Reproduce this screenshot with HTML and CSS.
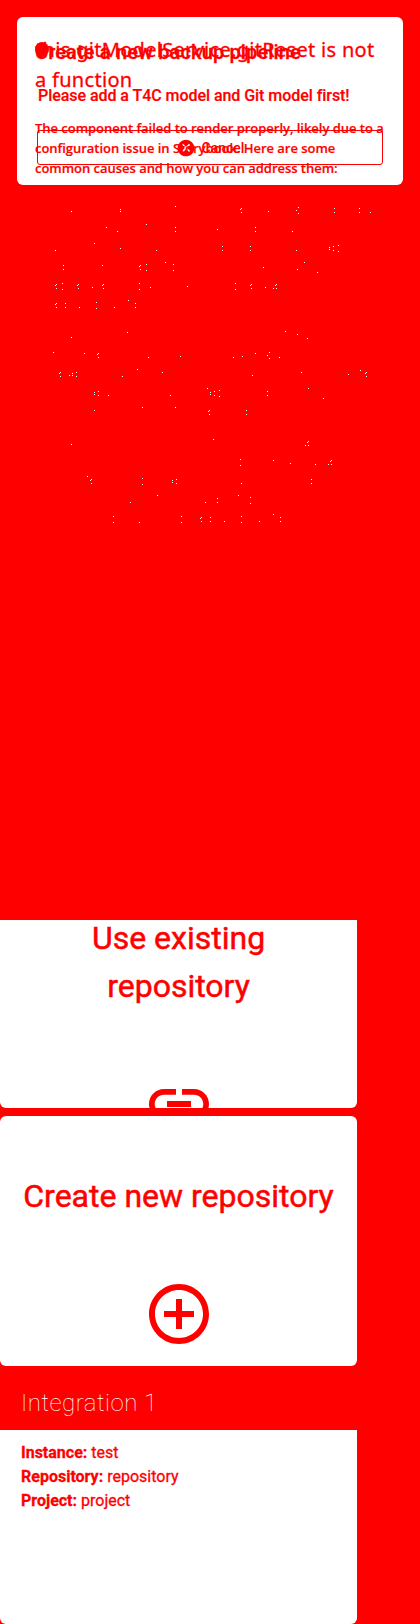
FILE: index.html
```html
<!DOCTYPE html>
<html lang="en">
<head>
  <meta charset="UTF-8">
  <meta name="viewport" content="width=device-width, initial-scale=1.0">
  <title>Create a new backup pipeline</title>
  <link rel="stylesheet" href="styles.css">
</head>
<body>
  <!-- error panel with the dialog drawn on top of it -->
  <div class="error-card">
    <h2 class="error-title">this.gitModelService.gitReset is not a function</h2>
    <p class="error-text">The component failed to render properly, likely due to a configuration issue in Storybook. Here are some common causes and how you can address them:</p>

    <div class="dialog">
      <span class="dialog-dot"></span>
      <h2 class="dialog-title">Create a new backup pipeline</h2>
      <p class="dialog-msg">Please add a T4C model and Git model first!</p>
      <button class="cancel-btn">
        <svg class="cancel-icon" viewBox="0 0 24 24"><path d="M12 2C6.47 2 2 6.47 2 12s4.47 10 10 10 10-4.47 10-10S17.53 2 12 2zm5 13.59L15.59 17 12 13.41 8.41 17 7 15.59 10.59 12 7 8.41 8.41 7 12 10.59 15.59 7 17 8.41 13.41 12 17 15.59z"/></svg>
        Cancel
      </button>
    </div>
  </div>

  <!-- leftovers of the stack trace -->
  <svg class="trace" viewBox="0 185 420 735">
    <path transform="translate(0 .5)" d="M71 211h1M120 209h1M120 211h1M175 206h1M241 208h1M240 209h1M241 212h1M268 211h1M298 207h1M296 210h1M298 213h1M334 208h1M334 212h1M359 208h1M359 212h1M370 212h1M106 227h1M117 231h1M146 224h1M175 227h1M175 231h1M217 229h1M255 227h1M255 231h1M292 231h1M94 243h1M55 250h1M120 248h1M156 250h1M222 246h1M222 250h1M250 246h1M250 250h1M296 250h1M329 247h1M329 249h1M333 246h1M333 250h1M338 245h1M338 251h1M63 265h1M63 269h1M102 265h1M140 265h1M139 266h1M140 269h1M146 264h1M146 270h1M165 262h1M173 264h1M173 270h1M263 267h1M297 269h1M304 262h1M317 272h1M56 284h1M55 285h1M56 288h1M62 283h1M62 289h1M78 284h1M77 285h1M78 288h1M92 287h1M103 284h1M102 285h1M103 288h1M139 283h1M139 289h1M150 287h1M187 286h1M235 283h1M235 289h1M251 284h1M250 285h1M251 288h1M265 287h1M273 288h1M276 284h1M275 285h1M276 288h1M56 303h1M55 304h1M56 307h1M65 303h1M65 307h1M79 307h1M96 302h1M96 308h1M114 307h1M128 300h1M135 303h1M135 307h1M71 337h1M127 332h1M285 331h1M297 334h1M307 338h1M53 352h1M84 353h1M98 353h1M97 354h1M98 357h1M148 357h1M180 356h1M233 357h1M242 356h1M255 353h1M269 352h1M267 355h1M269 358h1M279 357h1M60 372h1M59 373h1M60 376h1M69 375h1M72 373h1M72 375h1M76 372h1M76 376h1M122 376h1M137 369h1M162 372h1M252 375h1M301 372h1M348 374h1M360 370h1M366 372h1M365 373h1M366 376h1M94 392h1M94 394h1M98 391h1M98 395h1M108 395h1M170 395h1M207 388h1M210 392h1M210 394h1M214 391h1M214 395h1M219 390h1M219 396h1M267 391h1M267 395h1M308 388h1M323 398h1M94 410h1M142 407h1M175 407h1M209 410h1M208 411h1M209 414h1M246 410h1M246 414h1M213 439h1M71 444h1M308 441h1M307 442h1M305 445h1M308 445h1M240 459h1M240 465h1M273 460h1M290 463h1M315 464h1M328 464h1M331 460h1M330 461h1M331 464h1M87 476h1M91 479h1M90 480h1M91 483h1M142 478h1M142 484h1M172 480h1M172 482h1M176 479h1M176 483h1M241 483h1M311 479h1M311 483h1M157 495h1M130 502h1M205 502h1M217 498h1M217 502h1M238 495h1M250 497h1M250 503h1M113 516h1M113 522h1M139 522h1M181 516h1M181 522h1M201 517h1M200 518h1M201 521h1M210 517h1M210 521h1M224 521h1M241 516h1M241 522h1M259 521h1M273 514h1M280 517h1M280 521h1"/>
  </svg>

  <div class="cards">
    <div class="repo-card repo-card-cut">
      <div class="repo-title">Use existing repository</div>
      <svg class="repo-icon" viewBox="0 0 24 24"><path d="M3.9 12c0-1.71 1.39-3.1 3.1-3.1h4V7H7c-2.76 0-5 2.24-5 5s2.24 5 5 5h4v-1.9H7c-1.71 0-3.1-1.39-3.1-3.1zM8 13h8v-2H8v2zm9-6h-4v1.9h4c1.71 0 3.1 1.39 3.1 3.1s-1.39 3.1-3.1 3.1h-4V17h4c2.76 0 5-2.24 5-5s-2.24-5-5-5z"/></svg>
    </div>
    <div class="repo-card">
      <div class="repo-title">Create new repository</div>
      <svg class="repo-icon" viewBox="0 0 24 24"><path d="M13 7h-2v4H7v2h4v4h2v-4h4v-2h-4V7zm-1-5C6.48 2 2 6.48 2 12s4.48 10 10 10 10-4.48 10-10S17.52 2 12 2zm0 18c-4.41 0-8-3.59-8-8s3.59-8 8-8 8 3.59 8 8-3.59 8-8 8z"/></svg>
    </div>
  </div>

  <h3 class="integration-head">Integration 1</h3>
  <div class="integration-card">
    <div><b>Instance:</b> test</div>
    <div><b>Repository:</b> repository</div>
    <div><b>Project:</b> project</div>
  </div>
</body>
</html>
```

FILE: styles.css
```css
body {
  margin: 0;
  background-color: #ff0000;
  color: #ff0000;
  font-family: Roboto, sans-serif;
}

/* error panel */
.error-card {
  position: relative;
  margin: 17px 17px 0;
  height: 168px;
  padding: 18px 18px 0;
  box-sizing: border-box;
  background-color: #ffffff;
  border-radius: 6px;
  font-family: "Noto Sans", sans-serif;
}
.error-title {
  margin: 0;
  max-width: 345px;
  font-size: 20px;
  font-weight: 400;
  line-height: 30px;
  letter-spacing: 0.3px;
  -webkit-text-stroke: 0.3px #ff0000;
}
.error-text {
  margin: 23px -2px 0 0;
  font-family: "Open Sans", sans-serif;
  font-size: 13px;
  font-weight: 600;
  line-height: 20px;
  letter-spacing: -0.03px;
  -webkit-text-stroke: 0.2px #ff0000;
}

/* dialog on top of the panel */
.dialog {
  position: absolute;
  top: 20px;
  left: 18px;
  right: 20px;
  font-family: Roboto, sans-serif;
}
.dialog-dot {
  position: absolute;
  top: 5px;
  left: 0;
  width: 14px;
  height: 15px;
  border-radius: 50%;
  background-color: #ff0000;
}
.dialog-title {
  margin: 0;
  font-size: 20px;
  font-weight: 500;
  line-height: 30px;
  letter-spacing: 0.15px;
  -webkit-text-stroke: 0.3px #ff0000;
}
.dialog-msg {
  margin: 19px 0 0 3px;
  font-size: 16px;
  font-weight: 500;
  line-height: 20px;
  letter-spacing: -0.05px;
  -webkit-text-stroke: 0.2px #ff0000;
}
.cancel-btn {
  display: flex;
  align-items: center;
  justify-content: center;
  gap: 6px;
  width: 346px;
  height: 35px;
  margin: 24px 0 0 2px;
  padding: 0;
  border: 1px solid #ff0000;
  border-radius: 3px;
  background: none;
  color: #ff0000;
  font-family: Roboto, sans-serif;
  font-size: 14px;
  font-weight: 500;
}
.cancel-icon {
  width: 20px;
  height: 20px;
  fill: #ff0000;
}

.trace {
  display: block;
  width: 420px;
  height: 735px;
  stroke: #ffffff;
  stroke-width: 1;
  shape-rendering: crispEdges;
}

/* repository choices */
.cards {
  display: flex;
  flex-direction: column;
  gap: 8px;
  width: 357px;
}
.repo-card {
  height: 250px;
  padding: 56px 20px 0;
  box-sizing: border-box;
  overflow: hidden;
  background-color: #ffffff;
  border-radius: 6px;
  text-align: center;
}
.repo-card-cut {
  height: 188px;
  padding-top: 0;
  border-radius: 0 0 6px 6px;
}
.repo-card-cut .repo-title {
  margin-top: -6px;
}
.repo-title {
  font-size: 32px;
  font-weight: 400;
  line-height: 48px;
  -webkit-text-stroke: 0.5px #ff0000;
}
.repo-icon {
  display: block;
  width: 72px;
  height: 72px;
  margin: 58px auto 0;
  fill: #ff0000;
}

/* integration */
.integration-head {
  margin: 0;
  padding: 0 21px;
  height: 64px;
  color: #ffffff;
  font-size: 24px;
  font-weight: 100;
  line-height: 74px;
  letter-spacing: 0.5px;
}
.integration-card {
  width: 357px;
  height: 194px;
  padding: 11px 21px 0;
  box-sizing: border-box;
  background-color: #ffffff;
  border-radius: 0 0 6px 6px;
  font-size: 16px;
  line-height: 24px;
  -webkit-text-stroke: 0.3px #ff0000;
}
.integration-card b {
  font-weight: 700;
}
```
